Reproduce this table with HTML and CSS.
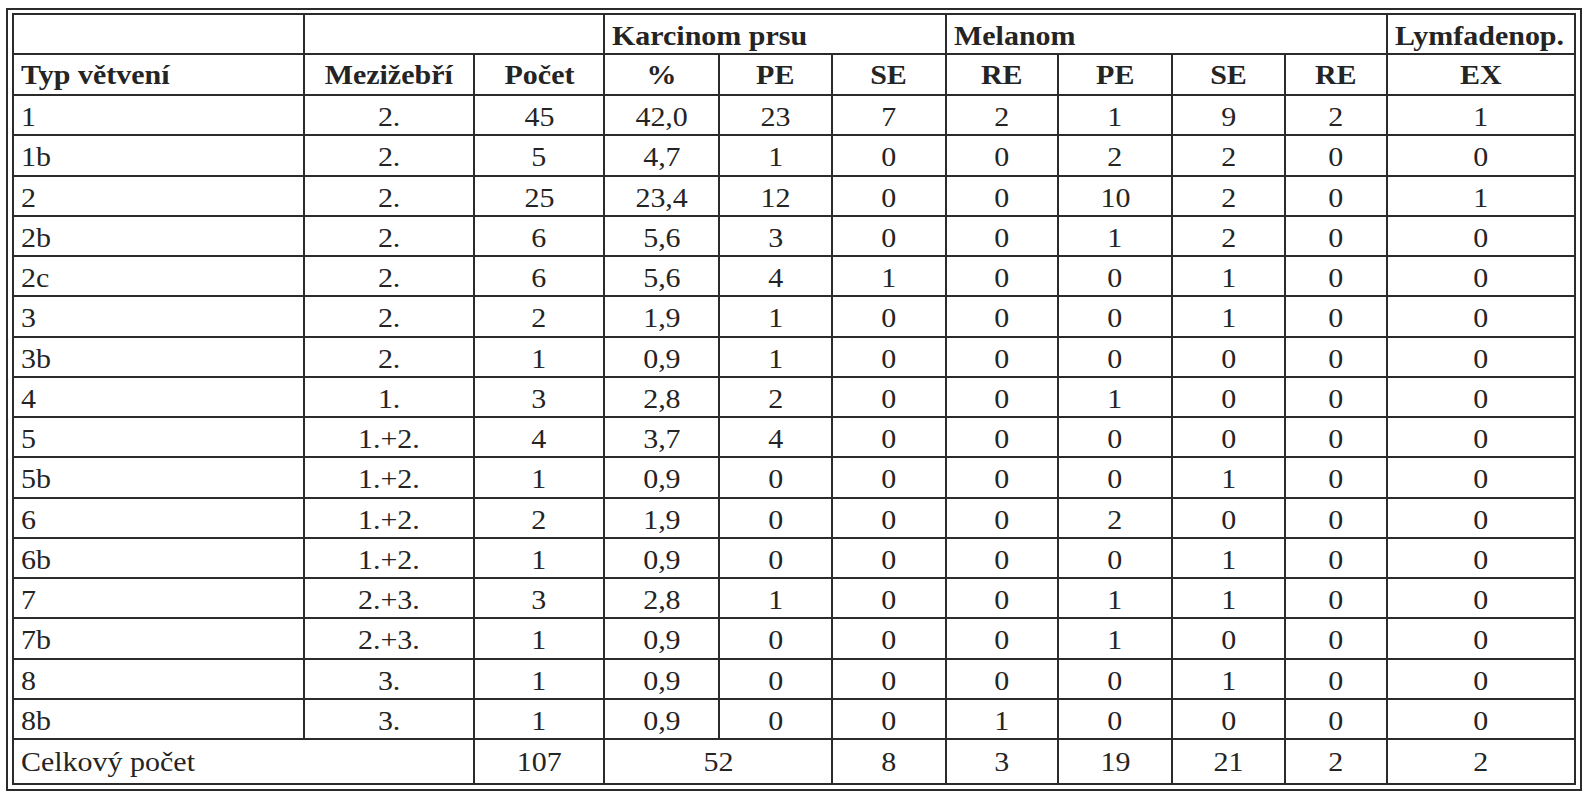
FILE: index.html
```html
<!DOCTYPE html>
<html lang="cs">
<head>
<meta charset="utf-8">
<title>Typ větvení</title>
<link rel="stylesheet" href="styles.css">
</head>
<body>
<div class="frame">
<table class="data">
<colgroup>
<col class="c1"><col class="c2"><col class="c3"><col class="c4"><col class="c5"><col class="c6"><col class="c7"><col class="c8"><col class="c9"><col class="c10"><col class="c11">
</colgroup>
<thead>
<tr class="h1">
<th></th>
<th colspan="2"></th>
<th colspan="3" class="left"><span class="t">Karcinom prsu</span></th>
<th colspan="4" class="left"><span class="t">Melanom</span></th>
<th class="left"><span class="t">Lymfadenop.</span></th>
</tr>
<tr class="h2">
<th class="left"><span class="t">Typ větvení</span></th>
<th><span class="t">Mezižebří</span></th>
<th><span class="t">Počet</span></th>
<th><span class="t">%</span></th>
<th><span class="t">PE</span></th>
<th><span class="t">SE</span></th>
<th><span class="t">RE</span></th>
<th><span class="t">PE</span></th>
<th><span class="t">SE</span></th>
<th><span class="t">RE</span></th>
<th><span class="t">EX</span></th>
</tr>
</thead>
<tbody>
<tr><td class="left"><span class="t">1</span></td><td><span class="t">2.</span></td><td><span class="t">45</span></td><td><span class="t">42,0</span></td><td><span class="t">23</span></td><td><span class="t">7</span></td><td><span class="t">2</span></td><td><span class="t">1</span></td><td><span class="t">9</span></td><td><span class="t">2</span></td><td><span class="t">1</span></td></tr>
<tr><td class="left"><span class="t">1b</span></td><td><span class="t">2.</span></td><td><span class="t">5</span></td><td><span class="t">4,7</span></td><td><span class="t">1</span></td><td><span class="t">0</span></td><td><span class="t">0</span></td><td><span class="t">2</span></td><td><span class="t">2</span></td><td><span class="t">0</span></td><td><span class="t">0</span></td></tr>
<tr><td class="left"><span class="t">2</span></td><td><span class="t">2.</span></td><td><span class="t">25</span></td><td><span class="t">23,4</span></td><td><span class="t">12</span></td><td><span class="t">0</span></td><td><span class="t">0</span></td><td><span class="t">10</span></td><td><span class="t">2</span></td><td><span class="t">0</span></td><td><span class="t">1</span></td></tr>
<tr><td class="left"><span class="t">2b</span></td><td><span class="t">2.</span></td><td><span class="t">6</span></td><td><span class="t">5,6</span></td><td><span class="t">3</span></td><td><span class="t">0</span></td><td><span class="t">0</span></td><td><span class="t">1</span></td><td><span class="t">2</span></td><td><span class="t">0</span></td><td><span class="t">0</span></td></tr>
<tr><td class="left"><span class="t">2c</span></td><td><span class="t">2.</span></td><td><span class="t">6</span></td><td><span class="t">5,6</span></td><td><span class="t">4</span></td><td><span class="t">1</span></td><td><span class="t">0</span></td><td><span class="t">0</span></td><td><span class="t">1</span></td><td><span class="t">0</span></td><td><span class="t">0</span></td></tr>
<tr><td class="left"><span class="t">3</span></td><td><span class="t">2.</span></td><td><span class="t">2</span></td><td><span class="t">1,9</span></td><td><span class="t">1</span></td><td><span class="t">0</span></td><td><span class="t">0</span></td><td><span class="t">0</span></td><td><span class="t">1</span></td><td><span class="t">0</span></td><td><span class="t">0</span></td></tr>
<tr><td class="left"><span class="t">3b</span></td><td><span class="t">2.</span></td><td><span class="t">1</span></td><td><span class="t">0,9</span></td><td><span class="t">1</span></td><td><span class="t">0</span></td><td><span class="t">0</span></td><td><span class="t">0</span></td><td><span class="t">0</span></td><td><span class="t">0</span></td><td><span class="t">0</span></td></tr>
<tr><td class="left"><span class="t">4</span></td><td><span class="t">1.</span></td><td><span class="t">3</span></td><td><span class="t">2,8</span></td><td><span class="t">2</span></td><td><span class="t">0</span></td><td><span class="t">0</span></td><td><span class="t">1</span></td><td><span class="t">0</span></td><td><span class="t">0</span></td><td><span class="t">0</span></td></tr>
<tr><td class="left"><span class="t">5</span></td><td><span class="t">1.+2.</span></td><td><span class="t">4</span></td><td><span class="t">3,7</span></td><td><span class="t">4</span></td><td><span class="t">0</span></td><td><span class="t">0</span></td><td><span class="t">0</span></td><td><span class="t">0</span></td><td><span class="t">0</span></td><td><span class="t">0</span></td></tr>
<tr><td class="left"><span class="t">5b</span></td><td><span class="t">1.+2.</span></td><td><span class="t">1</span></td><td><span class="t">0,9</span></td><td><span class="t">0</span></td><td><span class="t">0</span></td><td><span class="t">0</span></td><td><span class="t">0</span></td><td><span class="t">1</span></td><td><span class="t">0</span></td><td><span class="t">0</span></td></tr>
<tr><td class="left"><span class="t">6</span></td><td><span class="t">1.+2.</span></td><td><span class="t">2</span></td><td><span class="t">1,9</span></td><td><span class="t">0</span></td><td><span class="t">0</span></td><td><span class="t">0</span></td><td><span class="t">2</span></td><td><span class="t">0</span></td><td><span class="t">0</span></td><td><span class="t">0</span></td></tr>
<tr><td class="left"><span class="t">6b</span></td><td><span class="t">1.+2.</span></td><td><span class="t">1</span></td><td><span class="t">0,9</span></td><td><span class="t">0</span></td><td><span class="t">0</span></td><td><span class="t">0</span></td><td><span class="t">0</span></td><td><span class="t">1</span></td><td><span class="t">0</span></td><td><span class="t">0</span></td></tr>
<tr><td class="left"><span class="t">7</span></td><td><span class="t">2.+3.</span></td><td><span class="t">3</span></td><td><span class="t">2,8</span></td><td><span class="t">1</span></td><td><span class="t">0</span></td><td><span class="t">0</span></td><td><span class="t">1</span></td><td><span class="t">1</span></td><td><span class="t">0</span></td><td><span class="t">0</span></td></tr>
<tr><td class="left"><span class="t">7b</span></td><td><span class="t">2.+3.</span></td><td><span class="t">1</span></td><td><span class="t">0,9</span></td><td><span class="t">0</span></td><td><span class="t">0</span></td><td><span class="t">0</span></td><td><span class="t">1</span></td><td><span class="t">0</span></td><td><span class="t">0</span></td><td><span class="t">0</span></td></tr>
<tr><td class="left"><span class="t">8</span></td><td><span class="t">3.</span></td><td><span class="t">1</span></td><td><span class="t">0,9</span></td><td><span class="t">0</span></td><td><span class="t">0</span></td><td><span class="t">0</span></td><td><span class="t">0</span></td><td><span class="t">1</span></td><td><span class="t">0</span></td><td><span class="t">0</span></td></tr>
<tr><td class="left"><span class="t">8b</span></td><td><span class="t">3.</span></td><td><span class="t">1</span></td><td><span class="t">0,9</span></td><td><span class="t">0</span></td><td><span class="t">0</span></td><td><span class="t">1</span></td><td><span class="t">0</span></td><td><span class="t">0</span></td><td><span class="t">0</span></td><td><span class="t">0</span></td></tr>
<tr class="total"><td colspan="2" class="left"><span class="t">Celkový počet</span></td><td><span class="t">107</span></td><td colspan="2"><span class="t">52</span></td><td><span class="t">8</span></td><td><span class="t">3</span></td><td><span class="t">19</span></td><td><span class="t">21</span></td><td><span class="t">2</span></td><td><span class="t">2</span></td></tr>
</tbody>
</table>
</div>
</body>
</html>
```

FILE: styles.css
```css
html, body {
  margin: 0;
  padding: 0;
  background: #ffffff;
}

body {
  font-family: "Liberation Serif", "Times New Roman", serif;
  color: #242424;
}

.frame {
  margin: 8px 0 0 6px;
  width: 1566px;
  border: 2px solid #2b2b2b;
  padding: 3px 2px 4px 4px;
}

.data {
  border-collapse: collapse;
  table-layout: fixed;
  width: 1564px;
  font-size: 27px;
}

.c1 { width: 291px; }
.c2 { width: 170px; }
.c3 { width: 130px; }
.c4 { width: 115px; }
.c5 { width: 113px; }
.c6 { width: 114px; }
.c7 { width: 112px; }
.c8 { width: 114px; }
.c9 { width: 113px; }
.c10 { width: 102px; }
.c11 { width: 188px; }

.data th,
.data td {
  border: 2px solid #2b2b2b;
  text-align: center;
  vertical-align: middle;
  padding: 0 8px;
  line-height: 28px;
  white-space: nowrap;
}

.data th {
  font-weight: bold;
}

.data td {
  padding-top: 4px;
}

.h1 { height: 40px; }
.h1 th { padding-top: 3px; }
.h2 { height: 41px; }
.data tbody tr { height: 40.25px; }
.data tbody tr.total { height: 45px; }
.data tbody tr.total td { padding-top: 0; }

.data .left {
  text-align: left;
  padding-left: 7px;
}

.t {
  display: inline-block;
  transform: scaleX(1.11);
  transform-origin: center;
}

.left .t {
  transform-origin: left center;
}
```
